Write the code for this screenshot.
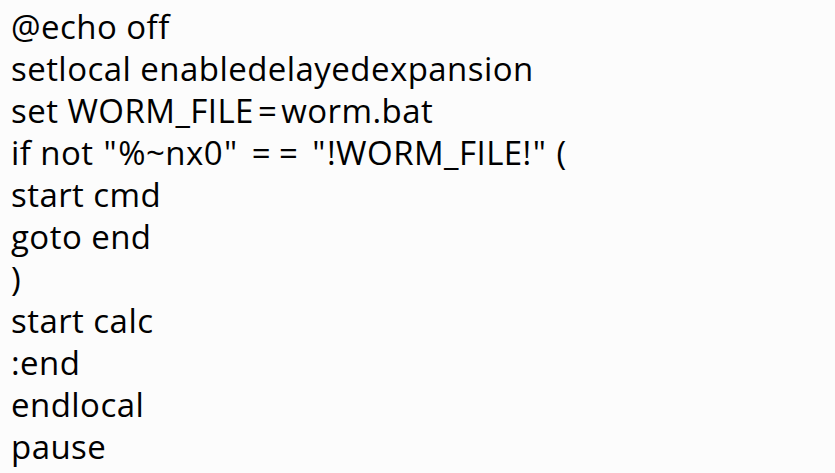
const lines = [
  '@echo off',
  'setlocal enabledelayedexpansion',
  'set WORM_FILE=worm.bat',
  'if not "%~nx0" == "!WORM_FILE!" (',
  'start cmd',
  'goto end',
  ')',
  'start calc',
  ':end',
  'endlocal',
  'pause',
];

// the reference font draws "=" and '"' wider than Open Sans does
function renderLine(line: string) {
  return line.split(/(=|")/).map((part, i) => {
    if (part === '=') return <span key={i} className="px-[4px]">=</span>;
    if (part === '"') return <span key={i} className="px-[1px]">"</span>;
    return part;
  });
}

export default function App() {
  return (
    <div className="w-[835px] h-[473px] overflow-hidden bg-[#fcfcfc] pl-[11px] pt-[6px] text-black">
      {lines.map((line, i) => (
        <div
          key={i}
          className="whitespace-pre h-[42px] leading-[42px] text-[33px] font-['Open_Sans',sans-serif] tracking-[0.45px]"
        >
          {renderLine(line)}
        </div>
      ))}
    </div>
  );
}
